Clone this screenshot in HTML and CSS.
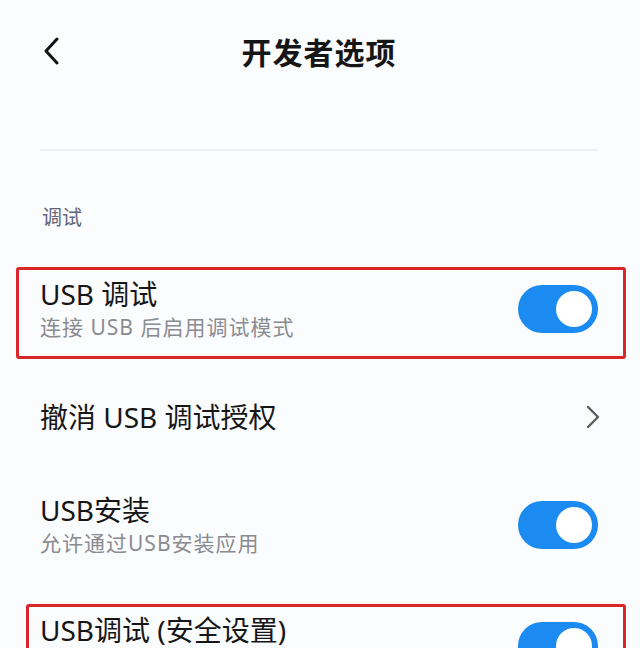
FILE: index.html
```html
<!DOCTYPE html>
<html lang="zh-CN">
  <head>
    <meta charset="UTF-8" />
    <meta name="viewport" content="width=device-width, initial-scale=1.0" />
    <title>开发者选项</title>
    <link rel="stylesheet" href="styles.css">
  </head>
  <body>
    <div class="page">
      <header class="topbar">
        <button class="back" aria-label="返回">
          <svg width="18" height="28" viewBox="0 0 18 28">
            <path d="M15 2 L4 14 L15 26" fill="none" stroke="#141414" stroke-width="3" stroke-linecap="round" stroke-linejoin="round" />
          </svg>
        </button>
        <h1>开发者选项</h1>
        <span class="spacer"></span>
      </header>

      <div class="divider"></div>

      <div class="section-label">调试</div>

      <div class="row marked">
        <div class="row-text">
          <div class="row-title">USB 调试</div>
          <div class="row-sub">连接 USB 后启用调试模式</div>
        </div>
        <label class="switch">
          <input type="checkbox" checked />
          <span class="track"></span>
        </label>
      </div>

      <div class="row">
        <div class="row-text">
          <div class="row-title">撤消 USB 调试授权</div>
        </div>
        <svg class="arrow" width="14" height="24" viewBox="0 0 14 24">
          <path d="M2 2 L12 12 L2 22" fill="none" stroke="#5c5c5c" stroke-width="2.4" stroke-linecap="round" stroke-linejoin="round" />
        </svg>
      </div>

      <div class="row">
        <div class="row-text">
          <div class="row-title">USB安装</div>
          <div class="row-sub">允许通过USB安装应用</div>
        </div>
        <label class="switch">
          <input type="checkbox" checked />
          <span class="track"></span>
        </label>
      </div>

      <div class="row row-last marked marked-inset">
        <div class="row-text">
          <div class="row-title">USB调试 (安全设置)</div>
        </div>
        <label class="switch">
          <input type="checkbox" checked />
          <span class="track"></span>
        </label>
      </div>
    </div>
  </body>
</html>
```

FILE: styles.css
```css
:root {
  --bg: #fbfcfe;
  --text: #161616;
  --text-sub: #8a8b90;
  --label: #62657a;
  --line: #eef0f3;
  --accent: #1b8bf1;
  --mark: #d8262a;
}

html,
body {
  margin: 0;
  padding: 0;
  background: var(--bg);
}

body {
  font-family: "Noto Sans", "Noto Sans CJK SC", sans-serif;
  color: var(--text);
  overflow: hidden;
  height: 648px;
}

.page {
  padding: 0 42px 0 40px;
}

/* header */
.topbar {
  height: 102px;
  display: flex;
  align-items: center;
}

.back {
  width: 40px;
  height: 40px;
  padding: 0 0 0 2px;
  border: none;
  background: none;
  display: flex;
  align-items: center;
  cursor: pointer;
}

.spacer {
  width: 40px;
}

.topbar h1 {
  flex: 1;
  margin: 0;
  text-align: center;
  font-size: 30px;
  font-weight: 600;
  letter-spacing: 1px;
}

.divider {
  height: 2px;
  margin-top: 47px;
  background: var(--line);
}

.section-label {
  margin-top: 53px;
  height: 28px;
  line-height: 28px;
  font-size: 20px;
  color: var(--label);
  padding-left: 2px;
}

/* list rows */
.row {
  position: relative;
  height: 108px;
  display: flex;
  align-items: center;
  justify-content: space-between;
}

.section-label + .row {
  margin-top: 23px;
}

/* last row runs past the screen edge, so its text sits at the top */
.row-last {
  margin-top: 12px;
  align-items: flex-start;
}

.row-last .row-text {
  padding-top: 21px;
}

.row-last .switch {
  margin-top: 31px;
}

.row-title {
  font-size: 28px;
  line-height: 36px;
}

.row-sub {
  font-size: 21px;
  line-height: 30px;
  color: var(--text-sub);
  letter-spacing: 1px;
}

.arrow {
  margin-right: -2px;
}

/* red frame drawn over highlighted rows */
.marked::after {
  content: "";
  position: absolute;
  top: 12px;
  bottom: 4px;
  left: -24px;
  right: -28px;
  border: 3px solid var(--mark);
  border-radius: 3px;
  pointer-events: none;
}

.marked-inset::after {
  top: 13px;
  left: -14px;
}

/* toggle switch */
.switch {
  position: relative;
  width: 80px;
  height: 48px;
  flex-shrink: 0;
  cursor: pointer;
}

.switch input {
  display: none;
}

.track {
  display: block;
  width: 100%;
  height: 100%;
  border-radius: 24px;
  background: #cfd3d9;
  transition: background 0.3s ease;
}

.track:before {
  content: "";
  position: absolute;
  top: 6px;
  left: 6px;
  width: 36px;
  height: 36px;
  border-radius: 50%;
  background: #fff;
  transition: transform 0.3s ease;
}

input:checked + .track {
  background: var(--accent);
}

input:checked + .track:before {
  transform: translateX(32px);
}
```
